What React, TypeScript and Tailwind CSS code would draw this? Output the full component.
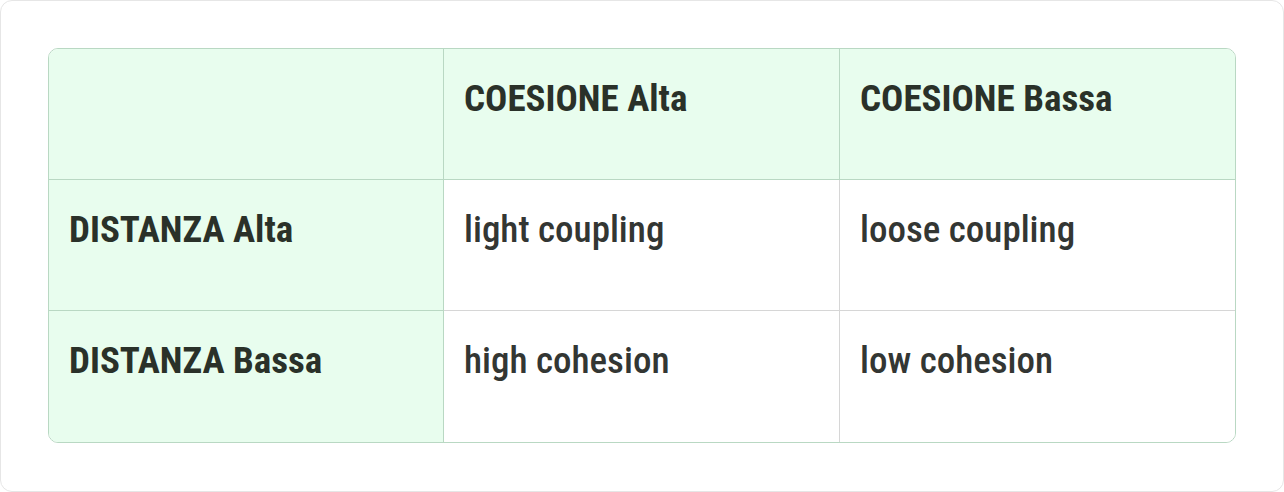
const rows = [
  { head: "DISTANZA Alta", cells: ["light coupling", "loose coupling"] },
  { head: "DISTANZA Bassa", cells: ["high cohesion", "low cohesion"] },
];

const cols = ["COESIONE Alta", "COESIONE Bassa"];

export default function App() {
  return (
    <div
      className="w-[1284px] h-[492px] bg-white"
      style={{ fontFamily: 'Roboto, "Noto Sans", sans-serif' }}
    >
      <div className="h-full rounded-xl border border-[#e6e6e6] p-[47px]">
        <div className="grid grid-cols-[395px_396px_396px] rounded-[10px] overflow-hidden border border-[#b9d8c3] text-[#2a3129] [font-stretch:75%]">
          {/* header row */}
          <div className="h-[131px] bg-[#e8fdee] border-r border-b border-[#b9d8c3]" />
          {cols.map((c, i) => (
            <div
              key={c}
              className={`h-[131px] bg-[#e8fdee] border-b border-[#b9d8c3] px-5 pt-[22px] text-[37px] font-bold leading-[55px] ${
                i === 0 ? "border-r" : ""
              }`}
            >
              {c}
            </div>
          ))}
          {rows.map((r, ri) => (
            <div key={r.head} className="contents">
              <div
                className={`h-[131px] bg-[#e8fdee] border-r border-[#b9d8c3] px-5 pt-[22px] text-[37px] font-bold leading-[55px] ${
                  ri === 0 ? "border-b" : ""
                }`}
              >
                {r.head}
              </div>
              {r.cells.map((c, ci) => (
                <div
                  key={c}
                  className={`h-[131px] bg-white border-[#d6d6d6] px-5 pt-[22px] text-[37px] font-medium leading-[55px] text-[#333633] ${
                    ri === 0 ? "border-b" : ""
                  } ${ci === 0 ? "border-r" : ""}`}
                >
                  {c}
                </div>
              ))}
            </div>
          ))}
        </div>
      </div>
    </div>
  );
}
